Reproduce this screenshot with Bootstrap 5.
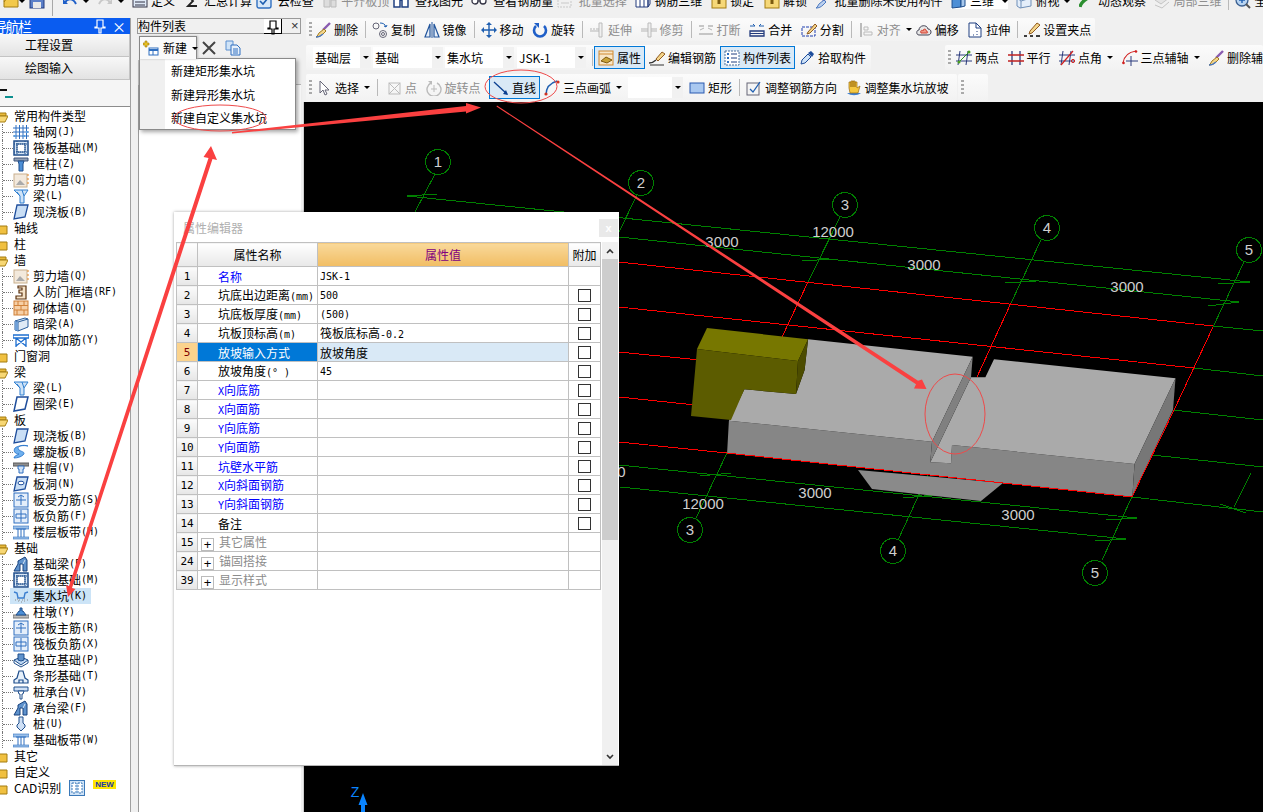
<!DOCTYPE html>
<html lang="zh">
<head>
<meta charset="utf-8">
<title>构件列表</title>
<link href="https://cdn.jsdelivr.net/npm/bootstrap@5.3.0/dist/css/bootstrap.min.css" rel="stylesheet">
<style>
html,body{margin:0;height:812px;overflow:hidden}
body{background:#f0f0f0;color:#000;font:12px/16px "Noto Sans CJK SC","Liberation Sans",sans-serif;position:relative;width:1263px}
svg.ic{width:16px;height:16px;flex:none;overflow:visible}
.lat{font:10px/16px "DejaVu Sans Mono",monospace}
.topstrip{height:18px;overflow:hidden;background:#f0f0f0;flex:none}
.topline{height:24px;margin-top:-11px;white-space:nowrap;padding-left:3px}
.tool{display:inline-flex;align-items:center;margin-right:8.5px;white-space:nowrap;flex:none}
.tool>svg.ic{margin-right:3px}
.off{color:#8e8e8e}
.tri{display:inline-block;width:0;height:0;border:3px solid transparent;border-top:3.5px solid #000;border-bottom:0;margin-left:5px}
.vsep{display:block;width:1px;height:17px;background:#b9b9b9;margin:0 6px 0 -1.5px;flex:none}
.sep3{margin:0 1px 0 3px}
.sep-top{display:block;width:1px;height:30px;background:#a8a8a8;flex:none;margin:0 9px 0 7px}
.gap10{margin-right:10px}
.gap6{margin-right:6px}
.mainrow{height:794px}
.navcol{width:131px;flex:none;background:#f0f0f0;border-right:1px solid #a0a0a0;overflow:hidden}
.navhead{height:16px;background:#0a5cf0;color:#fff;font-size:14px;line-height:16px;white-space:nowrap;flex:none;padding-left:0}
.navhead b{font-weight:400;margin-left:-7px;display:inline-block;letter-spacing:-1.5px}
.navbtn{height:23px;line-height:22px;text-align:center;font-size:12px;background:linear-gradient(#f8f8f8,#e3e3e3);border:1px solid #c4c4c4;border-top:0;flex:none;margin-left:-32px}
.navtool{height:26px;background:#f5f5f5;flex:none}
.bar1{width:7px;height:2px;background:#111;margin-top:9px}
.bar2{width:8px;height:2px;background:#0c8f8f;margin:5px 0 0 5px}
.treepane{background:#fff;border-top:1px solid #8c8c8c;padding-top:1px;flex:1 1 auto;font-size:12px}
.fold,.leaf{height:16px;display:flex;align-items:center;white-space:nowrap}
.fold>svg{margin:0 6px 0 -8px}
.leaf{margin-left:2px;border-left:1px dotted #777}
.twig{display:block;width:10px;border-top:1px dotted #777;flex:none}
.lbl{display:flex;align-items:center;height:16px;padding-right:1px}
.lbl>svg{margin-right:4px}
.lbl.picked{background:#cce4f7;margin-left:-3px;padding-left:3px;width:81px}
.newtag{display:inline-block;background:#ffe600;color:#1a3aa8;font:700 8px/9px "Liberation Sans",sans-serif;padding:0 2px;margin:-8px 0 0 2px}
.listcol{width:164px;flex:none;margin-left:6px;background:#f0f0f0;position:relative}
.listhead{height:16px;border:1px solid #9a9a9a;background:#f0f0f0;line-height:13px;font-size:12px;white-space:nowrap;flex:none}
.pinbox{width:18px;height:15px;background:#fff;border-right:1px solid #000;border-bottom:1px solid #000;margin-left:78px;text-align:center;line-height:12px}
.closex{margin-left:9px;font:13px/13px "Liberation Sans",sans-serif;color:#333}
.listtools{height:26px;padding:2px 0 0 2px;flex:none}
.newbtn{height:23px;width:58px;flex:none;white-space:nowrap;border:1px solid #888;border-bottom:0;background:#fafafa;padding-left:3px;font-size:12px;box-shadow:1px 0 2px #bbb;position:relative;z-index:4}
.newbtn svg{margin-right:4px}
.liststrip{height:25px;background:#f0f0f0;flex:none;border-left:1px solid #bbb;border-bottom:1px solid #bbb;margin-left:1px}
.listbody{background:#fff;border-left:1px solid #9a9a9a;margin-left:1px;flex:1 1 auto}
.newmenu.dropdown-menu{display:block;position:absolute;left:2px;top:40px;width:157px;height:72px;min-width:0;padding:0;margin:0;border:1px solid #8a8a8a;border-radius:0;box-shadow:2px 2px 4px rgba(0,0,0,.35);background:linear-gradient(90deg,#f0f0f0 25px,#fff 25px);z-index:3}
.newmenu .dropdown-item{height:23.5px;line-height:23px;padding:0 0 0 31px;color:#000;font-size:12px;background:none}
.rightcol{width:960px;flex:none;margin-left:2px;position:relative}
.tbrow{flex:none;padding-left:3px}
.tbrow.r1{height:27px}.tbrow.r2{height:28px}.tbrow.r3{height:29px}
.tb{display:flex;align-items:center;background:linear-gradient(#fbfbfb,#f2f2f2);border-radius:2px;flex:none}
.r1 .tb{height:23px;width:789px}
.r2 .tb{height:25px}
.r3 .tb{height:27px;margin-top:1px}
.r3 .tb.spare{width:30px;margin-left:1px}
.tb.first2{width:565px;padding-left:7px}
.tb.second2{flex:1 1 auto;margin-left:74px;overflow:hidden}
.grip{display:block;width:3px;height:15px;margin:0 3px 0 3px;flex:none;background:repeating-linear-gradient(#aaa 0 2px,transparent 2px 4px)}
.grip.wide{margin-right:5px}
.grip.r3g{margin-right:4px}
.combo{display:flex;height:21px;flex:none;background:#fff;line-height:21px}
.combo>span:first-child{flex:1;padding-left:2px}
.combo>span:last-child{width:11px;background:#f1f1f1;display:flex;align-items:center;justify-content:center}
.combo .tri{margin:0}
.w58{width:58px;margin-right:2px}.w70{width:70px;margin-right:2px}.w69{width:69px;margin-right:3px}.w55{width:55px;margin-right:6px}
.tbtn{display:inline-flex;align-items:center;height:23px;border:1px solid #0078d7;background:#d9e9f6;padding:0 3px;flex:none;white-space:nowrap}
.tbtn>svg.ic{margin-right:3px}
.r3 .tool.pad2{margin-left:2px}
.canvas3d{background:#000;flex:1 1 auto;border-left:1px solid #cfcfcf;min-height:0;overflow:hidden}
.canvas3d svg{display:block}
.canvas3d text{font:15px "Liberation Sans",sans-serif;fill:#cfcfcf;text-anchor:middle}
.canvas3d text.zz{font-size:14px;fill:#0a84ff}
.dlgbox{position:absolute;left:174px;top:212px;width:445px;height:554px;background:#fff;border:0;border-bottom:1px solid #b5b5b5;box-shadow:0 0 3px rgba(0,0,0,.35);z-index:5;border-radius:0}
.dlgtitle{height:30px;padding:8px 0 0 9px;color:#b0b0b0;font-size:12px;position:relative}
.dlgx{position:absolute;right:1px;top:7px;width:19px;height:18px;background:#e9e9e9;color:#fff;text-align:center;font:700 11px/18px "Liberation Sans",sans-serif}
.dlgmain{margin-left:2px}
.ptable{width:424px;table-layout:fixed;border-collapse:collapse;flex:none;--bs-table-bg:transparent;font-size:12px}
.ptable>:not(caption)>*>*{padding:0;height:19px;border:1px solid #c0c0c0;line-height:15px;vertical-align:middle;background:#fff;color:#000;font-weight:400;box-shadow:none;overflow:hidden}
.ptable>thead>tr>*{height:24px;text-align:center;background:linear-gradient(#fff,#e8e8e8)}
.ptable>thead>tr>th.valhd{background:linear-gradient(#f9d99b,#f1bd63);color:#800080}
.ptable>tbody>tr>td.idx{font:11px/15px "DejaVu Sans Mono",monospace;text-align:center;background:linear-gradient(#fbfbfb,#e6e6e6)}
.ptable .lat{line-height:15px}
.ptable>tbody>tr>td.nm{padding-left:20px;white-space:nowrap}
.ptable>tbody>tr>td.blu{color:#0000ff}
.ptable>tbody>tr>td.grp{color:#8c8c8c;padding-left:2px}
.ptable>tbody>tr>td.vl{padding-left:2px;white-space:nowrap}
.ptable>tbody>tr>td.vl.lat{font:10px/15px "DejaVu Sans Mono",monospace}
.ptable>tbody>tr>td.ck{text-align:center}
.ptable>tbody>tr.cur>td.idx{background:#fbd38d;color:#800000}
.ptable>tbody>tr.cur>td.nm{background:#0078d7;color:#fff}
.ptable>tbody>tr.cur>td.vl{background:#d9e9f6}
.ptable .form-check-input{width:13px;height:13px;margin:1px auto 0;border:1px solid #333;border-radius:0;background-color:#fff;display:block;float:none}
.plusbox{display:inline-block;width:13px;height:13px;border:1px solid #bbb;text-align:center;font:13px/11px "Liberation Sans",sans-serif;color:#000;margin:0 5px 0 1px;vertical-align:-2px}
.sbar{width:16px;margin-left:1px;background:#f0f0f0;height:523px;flex:none;display:flex;flex-direction:column;align-items:center}
.sbtn{height:17px;flex:none;display:flex;align-items:center;justify-content:center;width:100%}
.sthumb{height:281px;width:100%;background:#cdcdcd;flex:none}
.sdown{margin-top:auto}
.overlay{position:absolute;left:0;top:0;z-index:8;pointer-events:none}
</style>
</head>
<body>
<svg class="d-none" xmlns="http://www.w3.org/2000/svg">
<symbol id="folderc" viewBox="0 0 16 16"><path d="M1 4h5l2 2h7v8H1z" fill="#f0c040" stroke="#a47d10"/></symbol>
<symbol id="foldero" viewBox="0 0 16 16"><path d="M1 3h5l2 2h6v3H4l-3 6z" fill="#e8b93a" stroke="#a47d10"/><path d="M1 14l3-6h12l-3 6z" fill="#f7d774" stroke="#a47d10"/></symbol>
<symbol id="tgrid" viewBox="0 0 16 16"><path d="M3 1v14M6.500 1v14M10 1v14M13.500 1v14M0 4h16M0 8h16M0 12h16" stroke="#2f6fc0" fill="none"/><path d="M1 11h2v2H1zM10 11h2v2h-2zM13 7h2v2h-2z" fill="#5ba0e0"/></symbol>
<symbol id="traft" viewBox="0 0 16 16"><rect x="1" y="1" width="14" height="14" fill="#d8e6f5" stroke="#1f4e8c" stroke-width="1.500"/><rect x="4" y="4" width="8" height="8" fill="#fff" stroke="#1f4e8c"/><path d="M1 4h14M1 12h14M4 1v14M12 1v14" stroke="#1f4e8c" stroke-dasharray="1 1"/></symbol>
<symbol id="tcol" viewBox="0 0 16 16"><path d="M1 2h14v3H1z" fill="#8f9fb5" stroke="#40557a"/><path d="M5 5h6l-1 3v7H6V8z" fill="#4d8fd6" stroke="#1f4e8c"/></symbol>
<symbol id="twall" viewBox="0 0 16 16"><rect x="1" y="2" width="13" height="13" fill="#f3e9dc" stroke="#c9b08d"/><path d="M3 13l4-5 5 5z" fill="#aaa"/><path d="M14 3h2M14 7h2M14 11h2" stroke="#e08020"/></symbol>
<symbol id="tbeam" viewBox="0 0 16 16"><path d="M1 2h14L11 8v7H7V8z" fill="#cfe3f7" stroke="#2f7fd0"/><path d="M4 4l3 4M9 2l2 6" stroke="#2f7fd0"/></symbol>
<symbol id="tslab" viewBox="0 0 16 16"><path d="M4 1h11l-3 12-11 2z" fill="#c9def5" stroke="#1f4e9c" stroke-width="1.300"/></symbol>
<symbol id="tframe" viewBox="0 0 16 16"><path d="M5 2h8v13H3v-3h6V9H6V6h3V4H5z" fill="#f4e2c8" stroke="#5a3210" stroke-width="1.200"/></symbol>
<symbol id="tbrick" viewBox="0 0 16 16"><rect x="1" y="1" width="14" height="14" fill="#f6cfa6" stroke="#d08038"/><path d="M1 5.500h14M1 10h14M5 1v4.500M11 1v4.500M8 5.500V10M4 10v5M11 10v5" stroke="#d08038"/></symbol>
<symbol id="tbox" viewBox="0 0 16 16"><path d="M2 5l10-3 3 1v8l-10 4-3-1z" fill="#dfeaf6" stroke="#2a5e9c"/><path d="M5 6v9M2 5l3 1 10-3" stroke="#2a5e9c" fill="none"/><path d="M2 5l3 1v9l-3-1z" fill="#6fa0d8"/></symbol>
<symbol id="tbrace" viewBox="0 0 16 16"><path d="M0 3h16v3H0zM3 6v9M13 6v9M3 6l10 8M13 6L3 14" fill="none" stroke="#1e6fd0" stroke-width="1.300"/></symbol>
<symbol id="tring" viewBox="0 0 16 16"><path d="M4 1h11l-3 12-11 2z" fill="#fff" stroke="#1f4e9c" stroke-width="1.500"/></symbol>
<symbol id="tspiral" viewBox="0 0 16 16"><path d="M15 2C8 0 3 3 6 6c3 2 7 2 4 5-2 2-6 3-9 3 0-2 3-3 5-4-4 0-6-3-4-6 2-2 8-3 13-2z" fill="#6fb0ee" stroke="#1f6fc8" stroke-width=".8"/></symbol>
<symbol id="tcap" viewBox="0 0 16 16"><path d="M0 3h16v3H0z" fill="#8f8f8f" stroke="#5a5a5a"/><path d="M5 6h6v3h-1v4H6V9H5z" fill="#d0e2f6" stroke="#2f6fc0"/></symbol>
<symbol id="thole" viewBox="0 0 16 16"><path d="M4 1h11l-3 12-11 2z" fill="#c9def5" stroke="#1f4e9c" stroke-width="1.300"/><ellipse cx="8" cy="7" rx="3" ry="1.800" fill="#fff" stroke="#1f4e9c"/></symbol>
<symbol id="trebar" viewBox="0 0 16 16"><rect x="1" y="1" width="14" height="14" fill="#e4eefa" stroke="#2f6fc0"/><path d="M8 3v10M3 8h10M5 5l3-2 3 2" fill="none" stroke="#2f6fc0"/></symbol>
<symbol id="tneg" viewBox="0 0 16 16"><rect x="1" y="1" width="14" height="14" fill="#e4eefa" stroke="#2f6fc0"/><path d="M8 2v12M3 6h10v4H3z" fill="none" stroke="#2f6fc0"/></symbol>
<symbol id="tstrip" viewBox="0 0 16 16"><path d="M0 2h16v3H0zM0 13h16v2H0z" fill="#9cc0e8" stroke="#2f6fc0" stroke-width=".6"/><path d="M3 5h10M5 5v8M8 5v8M11 5v8" stroke="#2f6fc0"/></symbol>
<symbol id="tfbeam" viewBox="0 0 16 16"><path d="M1 15l4-7V5l7-4 2 3v11h-4V8H7v7z" fill="#5f92cc" stroke="#16407c"/><path d="M10 8l2-4" stroke="#d8e6f6"/></symbol>
<symbol id="tpit" viewBox="0 0 16 16"><path d="M1 4l3 1 1 5h6l1-5 3-1" fill="none" stroke="#3b7fd0" stroke-width="1.400"/><path d="M2 12h1M5 13h1M8 14h1M11 13h1M14 12h1M4 11h1M11 11h1M6 12h1M9 12h1" stroke="#8a8a8a"/></symbol>
<symbol id="tpier" viewBox="0 0 16 16"><path d="M0 11h16v3H0z" fill="#bbb" stroke="#777"/><path d="M3 11l3-4h1V4h2v3h1l3 4z" fill="#4d8fd6" stroke="#1f4e8c"/></symbol>
<symbol id="tpad" viewBox="0 0 16 16"><path d="M1 8l7-3 7 3-7 5z" fill="#bcd6f2" stroke="#1f4e8c"/><path d="M1 8v3l7 4 7-4V8" fill="none" stroke="#1f4e8c"/><path d="M5 2h6v6l-3 1-3-1z" fill="#5f92cc" stroke="#1f4e8c"/></symbol>
<symbol id="tstripf" viewBox="0 0 16 16"><path d="M1 15v-3l3-2 2-7h4l2 7 3 2v3zM6 15v-3h4v3" fill="#e6f0fa" stroke="#1f4e8c" stroke-width="1.200"/></symbol>
<symbol id="tcapf" viewBox="0 0 16 16"><path d="M1 3h14v4H1z" fill="#cfe0f5" stroke="#1f4e8c"/><path d="M5 7h6l-1 3H9v5H7v-5H6z" fill="#fff" stroke="#1f4e8c"/></symbol>
<symbol id="tpile" viewBox="0 0 16 16"><path d="M6 1h4v6l2 2v2l-4 4-4-4V9l2-2z" fill="#cfe0f5" stroke="#1f4e8c"/></symbol>
<symbol id="tcad" viewBox="0 0 16 16"><rect x=".5" y=".5" width="15" height="15" fill="#cfe3f7" stroke="#3a78b8"/><path d="M3 3h4v10H3zM9 3h4v10H9z" fill="#fff" stroke="#3a78b8" stroke-dasharray="2 1"/></symbol>
<symbol id="bdel" viewBox="0 0 16 16"><path d="M15 1L8 8" stroke="#8a5cb0" stroke-width="2.400"/><path d="M9 7l2 2-3 3c-2 2-4 3-7 3 2-1 2-3 3-4z" fill="#f4d58a" stroke="#a07b20"/><path d="M1 15c2 0 5-1 7-3" stroke="#4a78c0" stroke-width="1.300" fill="none"/></symbol>
<symbol id="bcopy" viewBox="0 0 16 16"><circle cx="4" cy="4" r="3" fill="none" stroke="#667"/><circle cx="11" cy="12" r="3.500" fill="none" stroke="#667"/><circle cx="11" cy="12" r="1.500" fill="none" stroke="#667"/><path d="M8 1c3 0 5 1 6 4M14 5l-2-1M14 5l1-2" stroke="#1f5fb0" fill="none"/></symbol>
<symbol id="bmirror" viewBox="0 0 16 16"><path d="M6 2L1 15h5zM10 2l5 13h-5z" fill="#e8f0fa" stroke="#22559c" stroke-width="1.200"/><path d="M8 0v16" stroke="#22559c"/></symbol>
<symbol id="bmove" viewBox="0 0 16 16"><path d="M8 1v14M1 8h14" stroke="#1f5fb0" stroke-width="1.400"/><path d="M8 0l3 3H5zM8 16l3-3H5zM0 8l3-3v6zM16 8l-3-3v6z" fill="#1f5fb0"/></symbol>
<symbol id="brot" viewBox="0 0 16 16"><path d="M4 4a6 6 0 1 0 8 0" fill="none" stroke="#1f5fc8" stroke-width="2.600"/><path d="M2 1h5v5z" fill="#1f5fc8"/></symbol>
<symbol id="bext" viewBox="0 0 16 16"><path d="M10 1h3v14h-3z" fill="#f0f0f0" stroke="#bbb"/><path d="M1 7h2M4 7h2M7 7h3M1 9h9" stroke="#b5b5b5"/></symbol>
<symbol id="btrim" viewBox="0 0 16 16"><path d="M7 1h3v14H7z" fill="#f0f0f0" stroke="#bbb"/><path d="M0 7h7M10 7h6M0 9h7M10 9h6" stroke="#b5b5b5"/></symbol>
<symbol id="bbrk" viewBox="0 0 16 16"><path d="M1 4h5M10 4h5M1 12h14" stroke="#b5b5b5" stroke-width="1.500"/><path d="M2 8l4-2M14 8l-4-2" stroke="#b5b5b5"/></symbol>
<symbol id="bmrg" viewBox="0 0 16 16"><path d="M1 4h5l-2-2M15 4h-5l2-2" stroke="#1f5fb0" fill="none"/><path d="M1 9h14v5H1z" fill="none" stroke="#223a7c" stroke-width="1.300"/><path d="M1 11.500h14" stroke="#223a7c"/></symbol>
<symbol id="bsplit" viewBox="0 0 16 16"><rect x="1" y="5" width="13" height="9" fill="none" stroke="#1f3fb0" stroke-dasharray="3 1"/><path d="M7 10l7-8 2 2-7 7-3 1z" fill="#f4d58a" stroke="#905a20"/></symbol>
<symbol id="balign" viewBox="0 0 16 16"><path d="M2 1h2v14H2z" fill="#bbb"/><path d="M6 5h4v3H6zM6 10h8v3H6z" fill="none" stroke="#bbb"/></symbol>
<symbol id="boff" viewBox="0 0 16 16"><path d="M3 13C0 13 0 8 3 8c0-5 8-6 9-1 4 0 4 6 0 6z" fill="#e8e8e8" stroke="#445"/><path d="M5 11c-1-3 1-3 2-2 0-3 4-2 3 0 2 0 2 2 1 2z" fill="#f09a8a" stroke="#d04030"/></symbol>
<symbol id="bstr" viewBox="0 0 16 16"><path d="M2 1h7l5 5v9H2z" fill="#fff" stroke="#1f3f80"/><path d="M9 1v5h5M10 9v1M10 12v1M6 13h1" stroke="#1f3f80" fill="none"/></symbol>
<symbol id="bgrip" viewBox="0 0 16 16"><path d="M6 9l7-8 3 2-8 8-3 1z" fill="#f4d58a" stroke="#905a20"/><path d="M0 14h3M6 14h3M12 14h4" stroke="#000" stroke-width="1.500"/></symbol>
<symbol id="bprop" viewBox="0 0 16 16"><rect x="1" y="1" width="14" height="14" fill="#f8e7c8" stroke="#d08a30"/><path d="M1 4h14" stroke="#d08a30"/><path d="M3 11l5-4 6 3-5 3z" fill="#c9a43a" stroke="#805a10"/></symbol>
<symbol id="brebar" viewBox="0 0 16 16"><path d="M0 13c3 0 5-1 7-3" stroke="#333" fill="none" stroke-width="1.300"/><path d="M7 9l6-7 3 2-7 7z" fill="#f4d58a" stroke="#905a20"/><path d="M1 15h14" stroke="#333"/></symbol>
<symbol id="blist" viewBox="0 0 16 16"><rect x="1" y="1" width="14" height="14" fill="#fff" stroke="#4a6f9c" stroke-dasharray="2 1"/><path d="M7 4h6M7 8h6M7 12h6" stroke="#1f3f80"/><path d="M3 3h2v2H3zM3 7h2v2H3zM3 11h2v2H3z" fill="#2f6fc0"/></symbol>
<symbol id="bpick" viewBox="0 0 16 16"><path d="M2 14l1-4 6-6 3 3-6 6z" fill="#cfe3f7" stroke="#1f4e9c"/><path d="M9 3l3-2 3 3-2 3z" fill="#1f4e9c"/></symbol>
<symbol id="btwo" viewBox="0 0 16 16"><path d="M4 1l-2 14M12 1l-2 14M0 5h16M0 11h16" stroke="#2a3a7c"/><path d="M14 1L2 13" stroke="#2f8f20"/><circle cx="13" cy="2" r="1.500" fill="#4a9f20"/><circle cx="3" cy="12" r="1.500" fill="#4a9f20"/></symbol>
<symbol id="bpar" viewBox="0 0 16 16"><path d="M4 1v14M12 1v14" stroke="#2a3a7c" stroke-width="1.300"/><path d="M0 5h16M0 11h16" stroke="#c02020" stroke-width="1.300"/></symbol>
<symbol id="bang" viewBox="0 0 16 16"><path d="M4 1l-2 14M12 1l-2 14M0 5h16M0 11h16" stroke="#2a3a7c"/><path d="M14 1L2 15" stroke="#d02020" stroke-width="1.200"/><circle cx="14" cy="11" r="1.600" fill="none" stroke="#d02020"/></symbol>
<symbol id="barc3" viewBox="0 0 16 16"><path d="M1 13C2 6 7 2 14 1" fill="none" stroke="#d02020" stroke-width="1.200"/><path d="M9 6v10M4 11h12" stroke="#2a3a7c"/><circle cx="1.500" cy="13" r="1.300" fill="#d02020"/><circle cx="14" cy="1.500" r="1.300" fill="#d02020"/></symbol>
<symbol id="bsel" viewBox="0 0 16 16"><path d="M4 1v12l3-3 2 5 2-1-2-4h4z" fill="#fff" stroke="#667"/></symbol>
<symbol id="bpt" viewBox="0 0 16 16"><rect x="3" y="3" width="11" height="11" fill="none" stroke="#bbb"/><path d="M3 3l11 11M14 3L3 14" stroke="#bbb"/></symbol>
<symbol id="brotp" viewBox="0 0 16 16"><path d="M5 3a7 7 0 1 0 6 0" fill="none" stroke="#bbb" stroke-width="1.400"/><path d="M8 5v7M5 9h6" stroke="#bbb"/><path d="M2 1h4v4z" fill="#bbb"/></symbol>
<symbol id="bline" viewBox="0 0 16 16"><path d="M1 2l13 12" stroke="#0a3f90" stroke-width="1.300"/><path d="M15 15l-5-1 3-4z" fill="#0a3f90"/></symbol>
<symbol id="barc" viewBox="0 0 16 16"><path d="M2 15C2 8 6 3 13 1" fill="none" stroke="#1f5fb0" stroke-width="1.400"/><circle cx="2" cy="14" r="1.600" fill="#d03020"/><circle cx="14" cy="2" r="1.600" fill="#d03020"/></symbol>
<symbol id="brect" viewBox="0 0 16 16"><rect x="1" y="3" width="14" height="10" fill="#a9c8f0" stroke="#2a5ab0"/></symbol>
<symbol id="badj" viewBox="0 0 16 16"><rect x="1" y="3" width="12" height="12" fill="#f4f4f4" stroke="#667"/><path d="M4 9l3 3 7-10" fill="none" stroke="#1f5fb0" stroke-width="1.300"/></symbol>
<symbol id="bhand" viewBox="0 0 16 16"><path d="M1 13c4 3 10 3 14 0z" fill="#3f7fd0"/><path d="M3 8V2h2v5-6h2v6-6h2v6-5h2v6l3-2-2 7H4z" fill="#f5c840" stroke="#9a6a10" stroke-width=".7"/></symbol>
<symbol id="bfile" viewBox="0 0 16 16"><path d="M1 5h14v9H1z" fill="#f2c94c" stroke="#a47d10"/><path d="M1 9l3-4h11" fill="none" stroke="#a47d10"/></symbol>
<symbol id="bsave" viewBox="0 0 16 16"><rect x="1" y="1" width="14" height="14" fill="#5b7fc8" stroke="#223a7c"/><rect x="4" y="9" width="8" height="6" fill="#e8e8e8"/><rect x="4" y="1" width="8" height="5" fill="#fff"/></symbol>
<symbol id="bundo" viewBox="0 0 16 16"><path d="M3 10c2-5 8-5 11 1" fill="none" stroke="#1f5fc8" stroke-width="2"/><path d="M1 6l5 5H1z" fill="#1f5fc8"/></symbol>
<symbol id="bredo" viewBox="0 0 16 16"><path d="M13 10c-2-5-8-5-11 1" fill="none" stroke="#c8c8c8" stroke-width="2"/><path d="M15 6l-5 5h5z" fill="#c8c8c8"/></symbol>
<symbol id="bdef" viewBox="0 0 16 16"><rect x="1" y="1" width="14" height="13" fill="#dfe9f6" stroke="#334"/><path d="M3 6h10M3 9h10M3 12h10" stroke="#334"/></symbol>
<symbol id="bsig" viewBox="0 0 16 16"><path d="M12 3H3l5 5-5 5h9" fill="none" stroke="#222" stroke-width="1.800"/></symbol>
<symbol id="bcheck" viewBox="0 0 16 16"><rect x="1" y="1" width="14" height="14" rx="2" fill="#d8e8f8" stroke="#2f6fc0" stroke-width="1.400"/><path d="M4 8l3 3 5-6" fill="none" stroke="#1f5fb0" stroke-width="1.600"/></symbol>
<symbol id="bflat" viewBox="0 0 16 16"><path d="M2 3h6v11H2zM9 7h5v7H9z" fill="#ddd" stroke="#bbb"/></symbol>
<symbol id="bfind" viewBox="0 0 16 16"><path d="M1 4h6v10H1zM9 4h6v10H9z" fill="#fff" stroke="#1f3f80" stroke-width="1.500"/><path d="M7 7h2" stroke="#1f3f80" stroke-width="2"/></symbol>
<symbol id="bglass" viewBox="0 0 16 16"><circle cx="4" cy="8" r="3" fill="#fff" stroke="#334" stroke-width="1.300"/><circle cx="12" cy="8" r="3" fill="#fff" stroke="#334" stroke-width="1.300"/><path d="M7 8h2" stroke="#334"/></symbol>
<symbol id="bbatch" viewBox="0 0 16 16"><rect x="1" y="3" width="13" height="11" fill="#f0f0f0" stroke="#c8c8c8" stroke-dasharray="2 1"/><path d="M4 6h8M4 10h8" stroke="#c8c8c8"/></symbol>
<symbol id="b3d" viewBox="0 0 16 16"><path d="M1 4h12v10H1z" fill="#fff" stroke="#223a7c"/><path d="M1 4l3-3h11l-2 3M13 4v10l2-3V1M5 4v10M9 4v10" fill="none" stroke="#223a7c"/></symbol>
<symbol id="block" viewBox="0 0 16 16"><rect x="1" y="2" width="14" height="13" fill="#f6d878" stroke="#a47d10"/><rect x="6.500" y="6" width="3" height="5" fill="#7a5a10"/></symbol>
<symbol id="bbrush" viewBox="0 0 16 16"><path d="M15 1L8 8" stroke="#8a5cb0" stroke-width="2.400"/><path d="M9 7l2 2-3 3c-2 2-4 3-7 3 2-1 2-3 3-4z" fill="#bcd0ee" stroke="#4a78c0"/></symbol>
<symbol id="bcube" viewBox="0 0 16 16"><path d="M1 4l9-2v12l-9 1z" fill="#4d8fd6" stroke="#1f4e8c"/><path d="M10 2l4 2v9l-4 1z" fill="#a8c8ec" stroke="#1f4e8c"/></symbol>
<symbol id="btop" viewBox="0 0 16 16"><path d="M1 5l10-3 4 3v8L4 15l-3-2z" fill="#e4eefa" stroke="#6f8fb8"/><path d="M1 5l4 3 10-3M5 8v7" fill="none" stroke="#6f8fb8"/></symbol>
<symbol id="borb" viewBox="0 0 16 16"><path d="M1 14c1-5 5-8 12-11" fill="none" stroke="#2c8f30" stroke-width="3.400"/><path d="M10 1l6 0-2 5z" fill="#2c8f30"/></symbol>
<symbol id="bloc" viewBox="0 0 16 16"><path d="M1 7l8-5 6 3-8 6z" fill="#e4e4e4" stroke="#c4c4c4"/><path d="M1 12l7 3 7-6" fill="none" stroke="#c4c4c4"/></symbol>
<symbol id="bzoom" viewBox="0 0 16 16"><circle cx="7" cy="7" r="6" fill="#b8d4f2" stroke="#3a5f90" stroke-width="1.300"/><path d="M7 4v6M4 7h6" stroke="#1f5fb0" stroke-width="1.400"/><path d="M11 11l4 4" stroke="#555" stroke-width="2"/></symbol>
<symbol id="bnew" viewBox="0 0 16 16"><path d="M0 3h2V1h2v2h2v2H4v2H2V5H0z" fill="#e8c020" stroke="#a07b10" stroke-width=".6"/><rect x="6" y="8" width="9" height="7" fill="#fff" stroke="#2f6fc0"/><path d="M6 10h9" stroke="#2f6fc0" stroke-width="2"/><path d="M10 10v5" stroke="#2f6fc0"/></symbol>
<symbol id="bx" viewBox="0 0 16 16"><path d="M2 2l12 12M14 2L2 14" stroke="#444" stroke-width="2"/></symbol>
<symbol id="bcp" viewBox="0 0 16 16"><path d="M1 1h7v9H1z" fill="#cfe3f7" stroke="#5a8fd0"/><path d="M6 5h6l3 3v7H6z" fill="#e8f1fb" stroke="#2f6fc0"/><path d="M8 9h5M8 11h5M8 13h5" stroke="#2f6fc0"/></symbol>
<symbol id="bpin" viewBox="0 0 16 16"><path d="M5 2h6v7h2v1H9v5H7v-5H3V9h2z" fill="none" stroke="#fff" stroke-width="1.200"/></symbol>
<symbol id="bpind" viewBox="0 0 16 16"><path d="M5 2h6v7h2v1H9v5H7v-5H3V9h2z" fill="none" stroke="#000" stroke-width="1.200"/></symbol>
<symbol id="chevu" viewBox="0 0 8 6"><path d="M1 5l3-3 3 3" fill="none" stroke="#333" stroke-width="1.600"/></symbol>
<symbol id="chevd" viewBox="0 0 8 6"><path d="M1 1l3 3 3-3" fill="none" stroke="#333" stroke-width="1.600"/></symbol>
</svg>

<div class="d-flex flex-column" id="page">
<div class="topstrip">
 <div class="topline d-flex align-items-center">
  <svg class="ic"><use href="#bfile"/></svg><i class="tri ms-0 me-1"></i>
  <svg class="ic"><use href="#bsave"/></svg><i class="sep-top"></i>
  <svg class="ic"><use href="#bundo"/></svg><i class="tri me-2"></i>
  <svg class="ic"><use href="#bredo"/></svg><i class="tri me-2"></i>
  <span class="tool gap10"><svg class="ic"><use href="#bdef"/></svg>定义</span>
  <span class="tool me-1"><svg class="ic"><use href="#bsig"/></svg>汇总计算</span>
  <span class="tool"><svg class="ic"><use href="#bcheck"/></svg>&nbsp;云检查</span>
  <span class="tool off me-1"><svg class="ic"><use href="#bflat"/></svg>平齐板顶</span>
  <span class="tool"><svg class="ic"><use href="#bfind"/></svg>&nbsp;查找图元</span>
  <span class="tool me-1"><svg class="ic"><use href="#bglass"/></svg>&nbsp;查看钢筋量</span>
  <span class="tool off"><svg class="ic"><use href="#bbatch"/></svg>&nbsp;批量选择</span>
  <span class="tool"><svg class="ic"><use href="#b3d"/></svg>钢筋三维</span>
  <span class="tool gap10"><svg class="ic"><use href="#block"/></svg>锁定</span>
  <span class="tool"><svg class="ic"><use href="#block"/></svg>解锁</span>
  <span class="tool"><svg class="ic"><use href="#bbrush"/></svg>批量删除未使用构件</span>
  <span class="tool bg-white"><svg class="ic"><use href="#bcube"/></svg>三维<i class="tri ms-2"></i></span>
  <span class="tool"><svg class="ic"><use href="#btop"/></svg>俯视<i class="tri"></i></span>
  <span class="tool"><svg class="ic"><use href="#borb"/></svg>动态观察</span>
  <span class="tool off"><svg class="ic"><use href="#bloc"/></svg>局部三维</span>
  <i class="vsep"></i>
  <span class="tool"><svg class="ic"><use href="#bzoom"/></svg>全</span>
 </div>
</div>

<div class="mainrow d-flex">
 <div class="navcol d-flex flex-column">
  <div class="navhead d-flex align-items-center"><b>导航栏</b><svg class="ic ms-auto"><use href="#bpin"/></svg><span class="text-white ms-1 me-1">×</span></div>
  <div class="navbtn">工程设置</div>
  <div class="navbtn">绘图输入</div>
  <div class="navtool"><div class="bar1"></div><div class="bar2"></div></div>
  <div class="treepane">
   <div class="fold"><svg class="ic"><use href="#foldero"/></svg>常用构件类型</div>
   <div class="leaf"><i class="twig"></i><span class="lbl"><svg class="ic"><use href="#tgrid"/></svg>轴网<span class="lat">(J)</span></span></div>
   <div class="leaf"><i class="twig"></i><span class="lbl"><svg class="ic"><use href="#traft"/></svg>筏板基础<span class="lat">(M)</span></span></div>
   <div class="leaf"><i class="twig"></i><span class="lbl"><svg class="ic"><use href="#tcol"/></svg>框柱<span class="lat">(Z)</span></span></div>
   <div class="leaf"><i class="twig"></i><span class="lbl"><svg class="ic"><use href="#twall"/></svg>剪力墙<span class="lat">(Q)</span></span></div>
   <div class="leaf"><i class="twig"></i><span class="lbl"><svg class="ic"><use href="#tbeam"/></svg>梁<span class="lat">(L)</span></span></div>
   <div class="leaf"><i class="twig"></i><span class="lbl"><svg class="ic"><use href="#tslab"/></svg>现浇板<span class="lat">(B)</span></span></div>
   <div class="fold"><svg class="ic"><use href="#folderc"/></svg>轴线</div>
   <div class="fold"><svg class="ic"><use href="#folderc"/></svg>柱</div>
   <div class="fold"><svg class="ic"><use href="#foldero"/></svg>墙</div>
   <div class="leaf"><i class="twig"></i><span class="lbl"><svg class="ic"><use href="#twall"/></svg>剪力墙<span class="lat">(Q)</span></span></div>
   <div class="leaf"><i class="twig"></i><span class="lbl"><svg class="ic"><use href="#tframe"/></svg>人防门框墙<span class="lat">(RF)</span></span></div>
   <div class="leaf"><i class="twig"></i><span class="lbl"><svg class="ic"><use href="#tbrick"/></svg>砌体墙<span class="lat">(Q)</span></span></div>
   <div class="leaf"><i class="twig"></i><span class="lbl"><svg class="ic"><use href="#tbox"/></svg>暗梁<span class="lat">(A)</span></span></div>
   <div class="leaf"><i class="twig"></i><span class="lbl"><svg class="ic"><use href="#tbrace"/></svg>砌体加筋<span class="lat">(Y)</span></span></div>
   <div class="fold"><svg class="ic"><use href="#folderc"/></svg>门窗洞</div>
   <div class="fold"><svg class="ic"><use href="#foldero"/></svg>梁</div>
   <div class="leaf"><i class="twig"></i><span class="lbl"><svg class="ic"><use href="#tbeam"/></svg>梁<span class="lat">(L)</span></span></div>
   <div class="leaf"><i class="twig"></i><span class="lbl"><svg class="ic"><use href="#tring"/></svg>圈梁<span class="lat">(E)</span></span></div>
   <div class="fold"><svg class="ic"><use href="#foldero"/></svg>板</div>
   <div class="leaf"><i class="twig"></i><span class="lbl"><svg class="ic"><use href="#tslab"/></svg>现浇板<span class="lat">(B)</span></span></div>
   <div class="leaf"><i class="twig"></i><span class="lbl"><svg class="ic"><use href="#tspiral"/></svg>螺旋板<span class="lat">(B)</span></span></div>
   <div class="leaf"><i class="twig"></i><span class="lbl"><svg class="ic"><use href="#tcap"/></svg>柱帽<span class="lat">(V)</span></span></div>
   <div class="leaf"><i class="twig"></i><span class="lbl"><svg class="ic"><use href="#thole"/></svg>板洞<span class="lat">(N)</span></span></div>
   <div class="leaf"><i class="twig"></i><span class="lbl"><svg class="ic"><use href="#trebar"/></svg>板受力筋<span class="lat">(S)</span></span></div>
   <div class="leaf"><i class="twig"></i><span class="lbl"><svg class="ic"><use href="#tneg"/></svg>板负筋<span class="lat">(F)</span></span></div>
   <div class="leaf"><i class="twig"></i><span class="lbl"><svg class="ic"><use href="#tstrip"/></svg>楼层板带<span class="lat">(H)</span></span></div>
   <div class="fold"><svg class="ic"><use href="#foldero"/></svg>基础</div>
   <div class="leaf"><i class="twig"></i><span class="lbl"><svg class="ic"><use href="#tfbeam"/></svg>基础梁<span class="lat">(F)</span></span></div>
   <div class="leaf"><i class="twig"></i><span class="lbl"><svg class="ic"><use href="#traft"/></svg>筏板基础<span class="lat">(M)</span></span></div>
   <div class="leaf"><i class="twig"></i><span class="lbl picked"><svg class="ic"><use href="#tpit"/></svg>集水坑<span class="lat">(K)</span></span></div>
   <div class="leaf"><i class="twig"></i><span class="lbl"><svg class="ic"><use href="#tpier"/></svg>柱墩<span class="lat">(Y)</span></span></div>
   <div class="leaf"><i class="twig"></i><span class="lbl"><svg class="ic"><use href="#trebar"/></svg>筏板主筋<span class="lat">(R)</span></span></div>
   <div class="leaf"><i class="twig"></i><span class="lbl"><svg class="ic"><use href="#tneg"/></svg>筏板负筋<span class="lat">(X)</span></span></div>
   <div class="leaf"><i class="twig"></i><span class="lbl"><svg class="ic"><use href="#tpad"/></svg>独立基础<span class="lat">(P)</span></span></div>
   <div class="leaf"><i class="twig"></i><span class="lbl"><svg class="ic"><use href="#tstripf"/></svg>条形基础<span class="lat">(T)</span></span></div>
   <div class="leaf"><i class="twig"></i><span class="lbl"><svg class="ic"><use href="#tcapf"/></svg>桩承台<span class="lat">(V)</span></span></div>
   <div class="leaf"><i class="twig"></i><span class="lbl"><svg class="ic"><use href="#tfbeam"/></svg>承台梁<span class="lat">(F)</span></span></div>
   <div class="leaf"><i class="twig"></i><span class="lbl"><svg class="ic"><use href="#tpile"/></svg>桩<span class="lat">(U)</span></span></div>
   <div class="leaf"><i class="twig"></i><span class="lbl"><svg class="ic"><use href="#tstrip"/></svg>基础板带<span class="lat">(W)</span></span></div>
   <div class="fold"><svg class="ic"><use href="#folderc"/></svg>其它</div>
   <div class="fold"><svg class="ic"><use href="#folderc"/></svg>自定义</div>
   <div class="fold"><svg class="ic"><use href="#folderc"/></svg>CAD识别<svg class="ic ms-2"><use href="#tcad"/></svg><span class="newtag">NEW</span></div>
  </div>
 </div>

 <div class="listcol d-flex flex-column">
  <div class="listhead d-flex">构件列表<span class="pinbox"><svg class="ic" viewBox="0 0 16 16"><use href="#bpind"/></svg></span><span class="closex">×</span></div>
  <div class="listtools d-flex">
   <span class="newbtn d-inline-flex align-items-center"><svg class="ic"><use href="#bnew"/></svg>新建<i class="tri"></i></span>
   <svg class="ic ms-1 mt-1"><use href="#bx"/></svg>
   <svg class="ic ms-2 mt-1"><use href="#bcp"/></svg>
  </div>
  <div class="liststrip"></div>
  <div class="listbody"></div>
  <div class="dropdown-menu newmenu">
   <a class="dropdown-item" href="#">新建矩形集水坑</a>
   <a class="dropdown-item" href="#">新建异形集水坑</a>
   <a class="dropdown-item" href="#">新建自定义集水坑</a>
  </div>
 </div>

 <div class="rightcol d-flex flex-column">
  <div class="tbrow r1 d-flex">
   <div class="tb">
    <i class="grip"></i>
    <span class="tool"><svg class="ic"><use href="#bdel"/></svg>删除</span><i class="vsep"></i>
    <span class="tool"><svg class="ic"><use href="#bcopy"/></svg>复制</span>
    <span class="tool"><svg class="ic"><use href="#bmirror"/></svg>镜像</span><i class="vsep"></i>
    <span class="tool"><svg class="ic"><use href="#bmove"/></svg>移动</span>
    <span class="tool"><svg class="ic"><use href="#brot"/></svg>旋转</span><i class="vsep"></i>
    <span class="tool off"><svg class="ic"><use href="#bext"/></svg>延伸</span>
    <span class="tool off"><svg class="ic"><use href="#btrim"/></svg>修剪</span><i class="vsep"></i>
    <span class="tool off"><svg class="ic"><use href="#bbrk"/></svg>打断</span>
    <span class="tool"><svg class="ic"><use href="#bmrg"/></svg>合并</span>
    <span class="tool"><svg class="ic"><use href="#bsplit"/></svg>分割</span><i class="vsep"></i>
    <span class="tool off me-1"><svg class="ic"><use href="#balign"/></svg>对齐<i class="tri"></i></span>
    <span class="tool"><svg class="ic"><use href="#boff"/></svg>偏移</span>
    <span class="tool"><svg class="ic"><use href="#bstr"/></svg>拉伸</span><i class="vsep"></i>
    <span class="tool"><svg class="ic"><use href="#bgrip"/></svg>设置夹点</span>
   </div>
  </div>
  <div class="tbrow r2 d-flex">
   <div class="tb first2">
    <span class="combo w58"><span>基础层</span><span><i class="tri"></i></span></span>
    <span class="combo w70"><span>基础</span><span><i class="tri"></i></span></span>
    <span class="combo w69"><span>集水坑</span><span><i class="tri"></i></span></span>
    <span class="combo w69"><span>JSK-1</span><span><i class="tri"></i></span></span>
    <i class="vsep sep3"></i>
    <span class="tbtn me-1"><svg class="ic"><use href="#bprop"/></svg>属性</span>
    <span class="tool me-1"><svg class="ic"><use href="#brebar"/></svg>编辑钢筋</span>
    <span class="tbtn me-1"><svg class="ic"><use href="#blist"/></svg>构件列表</span>
    <span class="tool"><svg class="ic"><use href="#bpick"/></svg>拾取构件</span>
   </div>
   <div class="tb second2">
    <i class="grip wide"></i>
    <span class="tool"><svg class="ic"><use href="#btwo"/></svg>两点</span>
    <span class="tool"><svg class="ic"><use href="#bpar"/></svg>平行</span>
    <span class="tool"><svg class="ic"><use href="#bang"/></svg>点角<i class="tri"></i></span>
    <span class="tool"><svg class="ic"><use href="#barc3"/></svg>三点辅轴<i class="tri"></i></span>
    <span class="tool"><svg class="ic"><use href="#bdel"/></svg>删除辅轴</span>
   </div>
  </div>
  <div class="tbrow r3 d-flex">
   <div class="tb">
    <i class="grip r3g"></i>
    <span class="tool"><svg class="ic"><use href="#bsel"/></svg>选择<i class="tri"></i></span><i class="vsep"></i>
    <span class="tool off pad2"><svg class="ic"><use href="#bpt"/></svg>点</span>
    <span class="tool off"><svg class="ic"><use href="#brotp"/></svg>旋转点</span>
    <span class="tbtn"><svg class="ic"><use href="#bline"/></svg>直线</span>
    <span class="tool ms-1 gap6"><svg class="ic"><use href="#barc"/></svg>三点画弧<i class="tri"></i></span>
    <span class="combo w55"><span></span><span><i class="tri"></i></span></span>
    <span class="tool"><svg class="ic"><use href="#brect"/></svg>矩形</span><i class="vsep"></i>
    <span class="tool"><svg class="ic"><use href="#badj"/></svg>调整钢筋方向</span>
    <span class="tool"><svg class="ic"><use href="#bhand"/></svg>调整集水坑放坡</span>
   </div>
   <div class="tb spare"><i class="grip"></i></div>
  </div>
  <div class="canvas3d">
   <svg width="959" height="710" viewBox="304 102 959 710" shape-rendering="crispEdges">
    <g fill="none" stroke="#008000">
     <path d="M435 174L415 212M637 195L619 232M840.600 216L808 282M1041 240L1011 303M1244 262L1213 327M727 453L695.500 519M928 475L898 540M1132 497L1102 560M1251 473L1234 507"/>
     <path d="M407 196L1250 282M619 237L1239 302M1213 326L1263 331M1194 368L1263 376M1173 410L1263 420M1152 455L1263 467M1132 497L1263 512M619 465L1137 518M620 487L1126 539"/>
     <path d="M407 196L437 194M1218 284L1250 282M802 261L833 259M1005 283L1036 281M1208 306L1239 302M700 476L731 473M903 498L935 495M1106 520L1137 518M1095 541L1126 539M1220 504L1246 513"/>
     <circle cx="438" cy="162" r="12.500"/><circle cx="641" cy="183" r="12.500"/><circle cx="845" cy="205" r="12.500"/><circle cx="1047" cy="228" r="12.500"/><circle cx="1249" cy="250" r="12.500"/>
     <circle cx="690" cy="530" r="12.500"/><circle cx="893" cy="551" r="12.500"/><circle cx="1095" cy="573" r="12.500"/>
    </g>
    <g fill="none" stroke="#ff0000">
     <path d="M619 262L1213 326M619 307L1194 368M619 352L700 360M619 397L695 405M619 442L727 453M808 282L782 337M1011 303L977 377M1213 327L1175 408"/>
    </g>
    <g shape-rendering="auto">
     <path d="M858 470L872 489L981 501L1003 483z" fill="#8a8a8a"/>
     <path d="M728.900 420.700L932 441.700L930.300 462.300L951 463.300L952 445L1134.500 464L1132.400 496.700L727.100 453.300z" fill="#868686"/>
     <path d="M808.100 339.300L972.700 356.700L932 441.700L728.900 420.700L744.400 389.300L796 394L804.600 370z" fill="#aaa"/>
     <path d="M994 359.300L1175.500 378.300L1134.500 464L952 445L951 463.300L930.300 462.300L971 377.300L985.400 377.300z" fill="#aaa"/>
     <path d="M972.700 356.700L971 377.300L930.300 462.300L932 441.700z" fill="#808080"/>
     <path d="M1175.500 378.300L1173 410L1132.400 496.700L1134.500 464z" fill="#777"/>
     <path d="M707 328L808.100 339.300L798 361L697 349z" fill="#777700"/>
     <path d="M697 349L798 361L796 394L744.400 389.300L731 420L691 416z" fill="#5c5c00"/>
     <path d="M808.100 339.300L804.600 370L796 394L798 361z" fill="#4c4c00"/>
    </g>
    <path d="M727 453L1132 497M1175 408L1132 497" fill="none" stroke="#ff0000"/>
    <g shape-rendering="auto">
     <text x="722" y="247">3000</text><text x="833" y="237">12000</text><text x="924" y="270">3000</text><text x="1127" y="292">3000</text>
     <text x="703" y="509">12000</text><text x="815" y="498">3000</text><text x="1018" y="520">3000</text><text x="609" y="477">3000</text>
     <text x="438" y="167">1</text><text x="641" y="188">2</text><text x="845" y="210">3</text><text x="1047" y="233">4</text><text x="1249" y="255">5</text>
     <text x="690" y="535">3</text><text x="893" y="556">4</text><text x="1095" y="578">5</text>
     <text class="zz" x="355" y="797">Z</text>
     <path d="M363 793L367.500 805H365V812H361V805H358.500z" fill="#0a84ff"/>
    </g>
   </svg>
  </div>
 </div>
</div>
</div>

<div class="card dlgbox">
 <div class="dlgtitle">属性编辑器<span class="dlgx">x</span></div>
 <div class="dlgmain d-flex align-items-start">
  <table class="table ptable mb-0">
   <colgroup><col style="width:21px"><col style="width:120px"><col style="width:251px"><col style="width:32px"></colgroup>
   <thead><tr><th></th><th>属性名称</th><th class="valhd">属性值</th><th>附加</th></tr></thead>
   <tbody>
    <tr><td class="idx">1</td><td class="nm blu">名称</td><td class="vl lat">JSK-1</td><td class="ck"></td></tr>
    <tr><td class="idx">2</td><td class="nm">坑底出边距离<span class="lat">(mm)</span></td><td class="vl lat">500</td><td class="ck"><input class="form-check-input" type="checkbox"></td></tr>
    <tr><td class="idx">3</td><td class="nm">坑底板厚度<span class="lat">(mm)</span></td><td class="vl lat">(500)</td><td class="ck"><input class="form-check-input" type="checkbox"></td></tr>
    <tr><td class="idx">4</td><td class="nm">坑板顶标高<span class="lat">(m)</span></td><td class="vl">筏板底标高<span class="lat">-0.2</span></td><td class="ck"><input class="form-check-input" type="checkbox"></td></tr>
    <tr class="cur"><td class="idx">5</td><td class="nm">放坡输入方式</td><td class="vl">放坡角度</td><td class="ck"><input class="form-check-input" type="checkbox"></td></tr>
    <tr><td class="idx">6</td><td class="nm">放坡角度<span class="lat">(° )</span></td><td class="vl lat">45</td><td class="ck"><input class="form-check-input" type="checkbox"></td></tr>
    <tr><td class="idx">7</td><td class="nm blu"><span class="lat">X</span>向底筋</td><td class="vl"></td><td class="ck"><input class="form-check-input" type="checkbox"></td></tr>
    <tr><td class="idx">8</td><td class="nm blu"><span class="lat">X</span>向面筋</td><td class="vl"></td><td class="ck"><input class="form-check-input" type="checkbox"></td></tr>
    <tr><td class="idx">9</td><td class="nm blu"><span class="lat">Y</span>向底筋</td><td class="vl"></td><td class="ck"><input class="form-check-input" type="checkbox"></td></tr>
    <tr><td class="idx">10</td><td class="nm blu"><span class="lat">Y</span>向面筋</td><td class="vl"></td><td class="ck"><input class="form-check-input" type="checkbox"></td></tr>
    <tr><td class="idx">11</td><td class="nm blu">坑壁水平筋</td><td class="vl"></td><td class="ck"><input class="form-check-input" type="checkbox"></td></tr>
    <tr><td class="idx">12</td><td class="nm blu"><span class="lat">X</span>向斜面钢筋</td><td class="vl"></td><td class="ck"><input class="form-check-input" type="checkbox"></td></tr>
    <tr><td class="idx">13</td><td class="nm blu"><span class="lat">Y</span>向斜面钢筋</td><td class="vl"></td><td class="ck"><input class="form-check-input" type="checkbox"></td></tr>
    <tr><td class="idx">14</td><td class="nm">备注</td><td class="vl"></td><td class="ck"><input class="form-check-input" type="checkbox"></td></tr>
    <tr><td class="idx">15</td><td class="grp"><span class="plusbox">+</span>其它属性</td><td class="vl"></td><td class="ck"></td></tr>
    <tr><td class="idx">24</td><td class="grp"><span class="plusbox">+</span>锚固搭接</td><td class="vl"></td><td class="ck"></td></tr>
    <tr><td class="idx">39</td><td class="grp"><span class="plusbox">+</span>显示样式</td><td class="vl"></td><td class="ck"></td></tr>
   </tbody>
  </table>
  <div class="sbar">
   <div class="sbtn"><svg width="8" height="6"><use href="#chevu"/></svg></div>
   <div class="sthumb"></div>
   <div class="sbtn sdown"><svg width="8" height="6"><use href="#chevd"/></svg></div>
  </div>
 </div>
</div>

<svg class="overlay" width="1263" height="812" viewBox="0 0 1263 812">
 <g fill="#fa4040">
  <path d="M211 146L217 160L212.500 159L72 588L75.500 589L68 597L66 585L69 586L208.500 158L203.500 157z"/>
  <path d="M232 132L232 133.500L466 111.500L466 113.500L481 107.500L466 103L466 106z"/>
  <path d="M497 105.500L496.500 106.500L916 384.200L914 388.500L926.500 389L922 379.500L918 380.800z"/>
 </g>
 <g fill="none" stroke="#ee4a4a">
  <ellipse cx="220" cy="118" rx="46" ry="13"/>
  <ellipse cx="521" cy="86.500" rx="36" ry="16.500"/>
  <ellipse cx="955" cy="414" rx="30" ry="40"/>
 </g>
</svg>
</body>
</html>
